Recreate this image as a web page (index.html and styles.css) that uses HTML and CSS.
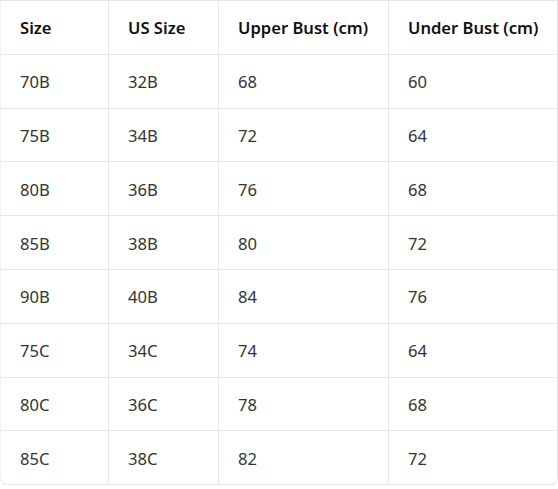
FILE: index.html
```html
<!DOCTYPE html>
<html>
<head>
<meta charset="utf-8">
<link rel="stylesheet" href="styles.css">
</head>
<body>
<div class="wrap">
<table class="size-table">
<thead>
<tr><th class="c1">Size</th><th class="c2">US Size</th><th class="c3">Upper Bust (cm)</th><th class="c4">Under Bust (cm)</th></tr>
</thead>
<tbody>
<tr><td>70B</td><td>32B</td><td>68</td><td>60</td></tr>
<tr><td>75B</td><td>34B</td><td>72</td><td>64</td></tr>
<tr><td>80B</td><td>36B</td><td>76</td><td>68</td></tr>
<tr><td>85B</td><td>38B</td><td>80</td><td>72</td></tr>
<tr><td>90B</td><td>40B</td><td>84</td><td>76</td></tr>
<tr><td>75C</td><td>34C</td><td>74</td><td>64</td></tr>
<tr><td>80C</td><td>36C</td><td>78</td><td>68</td></tr>
<tr><td>85C</td><td>38C</td><td>82</td><td>72</td></tr>
</tbody>
</table>
</div>
</body>
</html>
```
FILE: styles.css
```css
html, body {
  margin: 0;
  padding: 0;
  background: #ffffff;
}
.wrap {
  width: 558px;
  box-sizing: border-box;
  border: 1px solid #e6e6e6;
  border-left-color: #f2f2f2;
  border-radius: 0 0 8px 8px;
  overflow: hidden;
  box-shadow: 0 1px 2px rgba(0,0,0,0.05);
}
.size-table {
  width: 100%;
  border-collapse: collapse;
  font-family: "Noto Sans", "Open Sans", sans-serif;
  font-size: 16.6px;
  color: #333333;
  table-layout: fixed;
}
.size-table th, .size-table td {
  text-align: left;
  padding: 1px 0 0 19px;
  height: 51.8px;
  border-right: 1px solid #e6e6e6;
  border-bottom: 1px solid #e6e6e6;
}
.size-table tr > :last-child {
  border-right: none;
}
.size-table tbody tr:last-child td {
  border-bottom: none;
}
.size-table th {
  font-weight: 600;
  color: #111111;
}
.c1 { width: 88px; }
.c2 { width: 90px; }
.c3 { width: 150px; }
```
